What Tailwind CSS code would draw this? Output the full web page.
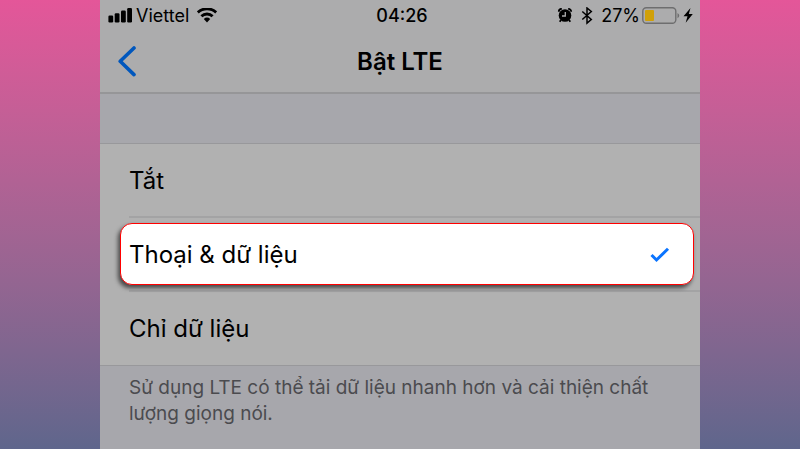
<!DOCTYPE html>
<html lang="vi">

<head>
  <meta charset="UTF-8">
  <meta name="viewport" content="width=device-width, initial-scale=1.0">
  <title>Bật LTE</title>
  <script src="https://cdn.jsdelivr.net/npm/@tailwindcss/browser@4"></script>
</head>

<body class="min-h-screen bg-linear-to-b from-[#e45699] to-[#5f668c] font-['Inter','Noto_Sans',sans-serif] text-black">
  <main class="mx-auto flex min-h-screen w-3/4 flex-col bg-[#a7a7ac]">
    <!-- Header -->
    <header class="border-b-2 border-[#969698] bg-[#acacad]">
      <!-- Status bar -->
      <div class="grid h-8 grid-cols-3 items-center px-2 text-lg leading-none">
        <div class="flex items-center gap-1">
          <svg class="h-4 w-6 shrink-0" viewBox="0 0 24 16" aria-hidden="true">
            <rect x="0.4" y="7.5" width="4.8" height="7" rx="1.2" />
            <rect x="6.7" y="5.2" width="4.8" height="9.3" rx="1.2" />
            <rect x="13" y="2.5" width="4.8" height="12" rx="1.2" />
            <rect x="19.2" y="0" width="4.8" height="14.5" rx="1.2" />
          </svg>
          <span>Viettel</span>
          <svg class="ml-1 h-4 w-5 shrink-0" viewBox="2 1 20 16" fill="none" stroke="black" stroke-width="2.8" aria-hidden="true">
            <path d="M2.8 5.4a13.5 13.5 0 0 1 18.4 0" />
            <path d="M6.4 9.3a8 8 0 0 1 11.2 0" />
            <path d="M12 15.4l-3.2-3.4a4.7 4.7 0 0 1 6.4 0z" fill="black" stroke="none" />
          </svg>
        </div>
        <time class="ml-1 text-center font-medium">04:26</time>
        <div class="-mr-0.5 flex items-center justify-end">
          <svg class="mr-1 h-4 w-4 shrink-0" viewBox="0 0 16 16" aria-hidden="true">
            <circle cx="8" cy="7.5" r="6.3" />
            <path d="M1.8 3.8a3 3 0 0 1 3-3M14.2 3.8a3 3 0 0 0-3-3M4 12l-1.3 1.8M12 12l1.3 1.8" fill="none" stroke="black" stroke-width="1.8" />
            <path d="M8.3 4v4H5" fill="none" stroke="#acacad" stroke-width="1.3" />
          </svg>
          <svg class="mr-2 ml-1 h-[18px] w-3 shrink-0" viewBox="0 0 12 18" fill="none" stroke="black" stroke-width="1.5" aria-hidden="true">
            <path d="M1.3 4.5l9 8L6 16.1V1l4.3 3.5-9 8" />
          </svg>
          <span>27%</span>
          <svg class="ml-0.5 h-[18px] w-10 shrink-0" viewBox="0 0 40 18" aria-hidden="true">
            <rect x="0.8" y="0.8" width="33" height="15.4" rx="3.5" fill="none" stroke="#6e6e6f" stroke-width="1.4" />
            <rect x="3" y="3" width="9" height="11" rx="1" fill="#d0a008" />
            <path d="M35.5 6q3.5 2.6 0 5.2z" fill="#6e6e6f" />
          </svg>
          <svg class="h-4 w-3 shrink-0" viewBox="0 1 12 16" aria-hidden="true">
            <path d="M8.5 1L1.5 9.3h4L3.7 15.8 10.8 7H6.8z" />
          </svg>
        </div>
      </div>
      <!-- Navigation bar -->
      <div class="grid h-15 grid-cols-3 items-center px-4">
        <button type="button" aria-label="Quay lại" class="justify-self-start">
          <svg class="h-8 w-6" viewBox="0 0 24 32" fill="none" stroke="#0057bd" stroke-width="3.6" stroke-linecap="round" stroke-linejoin="round" aria-hidden="true">
            <path d="M18 2L4.2 15.3 18 28.6" />
          </svg>
        </button>
        <h1 class="text-center text-2xl font-semibold">Bật LTE</h1>
      </div>
    </header>

    <!-- LTE options -->
    <div role="radiogroup" aria-label="Bật LTE" class="mt-[49px] border-y border-[#98989b] bg-[#b1b1b1] text-2xl">
      <div class="pl-[29px]">
        <label class="flex h-[74px] cursor-pointer items-center border-b-2 border-[#a3a3a4] pt-0.5">
          <input type="radio" name="lte" value="off" class="appearance-none">
          Tắt
        </label>
      </div>
      <div class="relative h-[74px] py-[5px] pr-[6px] pl-5 after:absolute after:right-0 after:bottom-0 after:left-[29px] after:h-[2px] after:bg-[#a3a3a4]">
        <label class="relative z-10 flex h-[62px] cursor-pointer items-center justify-between rounded-xl border border-[#ff0000] bg-white pt-0.5 pr-[23px] pl-2 shadow-[-2px_3px_4px_0px_rgba(0,0,0,0.6)]">
          <span><input type="radio" name="lte" value="voice-data" class="appearance-none" checked>Thoại &amp; dữ liệu</span>
          <svg class="h-4 w-5" viewBox="0 0 20 16" fill="none" stroke="#0a74ff" stroke-width="3" aria-hidden="true">
            <path d="M1.5 8l5 5L18 1.8" />
          </svg>
        </label>
      </div>
      <div class="pl-[29px]">
        <label class="flex h-[73px] cursor-pointer items-center">
          <input type="radio" name="lte" value="data" class="appearance-none">
          Chỉ dữ liệu
        </label>
      </div>
    </div>

    <p class="px-[29px] pt-[9px] text-[19px] leading-[26px] text-[#4b4b4f]">
      Sử dụng LTE có thể tải dữ liệu nhanh hơn và cải thiện chất lượng giọng nói.
    </p>
  </main>
</body>

</html>
